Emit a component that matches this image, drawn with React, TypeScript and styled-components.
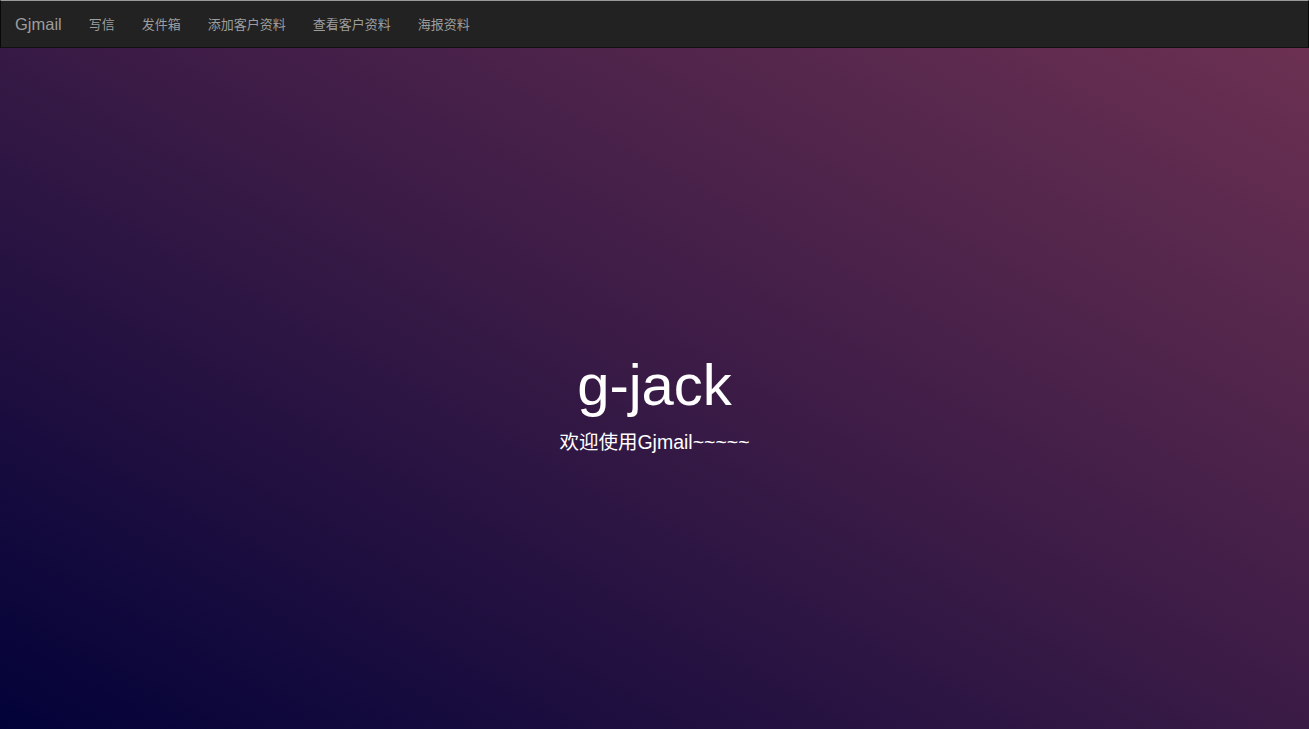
import React from "react";
import styled, { createGlobalStyle } from "styled-components";

const GlobalStyle = createGlobalStyle`
  html, body { margin: 0; padding: 0; height: 100%; }
  body {
    font-family: "Liberation Sans", Arial, "Noto Sans CJK SC", sans-serif;
    background: #1a0f30;
  }
  #root { min-height: 100vh; }
`;

const Page = styled.div`
  min-height: 100vh;
  display: flex;
  flex-direction: column;
  background: linear-gradient(to top right, #020238 0%, #3a1b46 50%, #6f3253 100%);
`;

const NavBar = styled.nav`
  height: 46px;
  display: flex;
  align-items: center;
  background: #222222;
  border-top: 1px solid #9a9a9a;
  border-left: 1px solid #080808;
  border-right: 1px solid #080808;
  border-bottom: 1px solid #101010;
  padding: 0 14px;
  box-sizing: content-box;
`;

const Brand = styled.a`
  font-family: "Liberation Sans", Arial, sans-serif;
  font-size: 16.5px;
  color: #9d9d9d;
  text-decoration: none;
  margin-right: 27px;
  line-height: 46px;
`;

const NavLinks = styled.ul`
  display: flex;
  gap: 27px;
  margin: 0;
  padding: 0;
  list-style: none;
`;

const NavLink = styled.a`
  font-family: "Noto Sans CJK SC", "Liberation Sans", sans-serif;
  font-size: 13px;
  color: #9d9d9d;
  text-decoration: none;
  line-height: 46px;
`;

const Hero = styled.main`
  flex: 1;
  display: flex;
  flex-direction: column;
  align-items: center;
  justify-content: center;
  padding-top: 31px;
`;

const Title = styled.h1`
  margin: 0 0 11px;
  font-family: "Liberation Sans", Arial, sans-serif;
  font-weight: 400;
  font-size: 58px;
  line-height: 64px;
  color: #ffffff;
`;

const Subtitle = styled.p`
  margin: 0;
  font-family: "Liberation Sans", Arial, "Noto Sans CJK SC", sans-serif;
  font-size: 19.5px;
  line-height: 28px;
  color: #ffffff;
`;

const links = ["写信", "发件箱", "添加客户资料", "查看客户资料", "海报资料"];

export default function App() {
  return (
    <>
      <GlobalStyle />
      <Page>
        <NavBar>
          <Brand href="#">Gjmail</Brand>
          <NavLinks>
            {links.map((l) => (
              <li key={l}>
                <NavLink href="#">{l}</NavLink>
              </li>
            ))}
          </NavLinks>
        </NavBar>
        <Hero>
          <Title>g-jack</Title>
          <Subtitle>欢迎使用Gjmail~~~~~</Subtitle>
        </Hero>
      </Page>
    </>
  );
}
